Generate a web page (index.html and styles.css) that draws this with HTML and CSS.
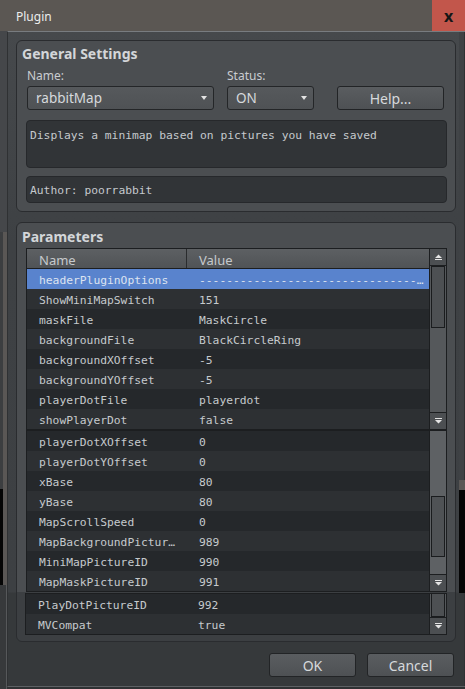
FILE: index.html
```html
<!DOCTYPE html>
<html lang="en">
<head>
  <meta charset="UTF-8">
  <meta name="viewport" content="width=device-width, initial-scale=1.0">
  <title>Plugin</title>
  <link rel="stylesheet" href="styles.css">
</head>
<body>
  <div class="titlebar">
    <span class="title">Plugin</span>
    <button class="close">x</button>
  </div>

  <div class="frame">
    <!-- strips of the windows behind -->
    <div class="edge">
      <div class="edge-top"></div>
      <div class="edge-mid"></div>
      <div class="edge-dark"></div>
      <div class="edge-bottom"></div>
    </div>

    <div class="dialog">
      <section class="group general">
        <h2>General Settings</h2>
        <div class="fields">
          <div class="field field-name">
            <label>Name:</label>
            <div class="combo"><span>rabbitMap</span><i class="caret"></i></div>
          </div>
          <div class="field field-status">
            <label>Status:</label>
            <div class="combo"><span>ON</span><i class="caret"></i></div>
          </div>
          <div class="field field-help">
            <button class="btn">Help...</button>
          </div>
        </div>
        <div class="textbox desc">Displays a minimap based on pictures you have saved</div>
        <div class="textbox author">Author: poorrabbit</div>
      </section>

      <section class="group params">
        <h2>Parameters</h2>
        <div class="table">
          <div class="panel panel-a">
            <div class="list">
              <div class="head"><span>Name</span><span>Value</span></div>
              <div class="rows">
                <div class="row selected"><span class="key">headerPluginOptions</span><span class="val">------------------------------------------------</span></div>
                <div class="row"><span class="key">ShowMiniMapSwitch</span><span class="val">151</span></div>
                <div class="row"><span class="key">maskFile</span><span class="val">MaskCircle</span></div>
                <div class="row"><span class="key">backgroundFile</span><span class="val">BlackCircleRing</span></div>
                <div class="row"><span class="key">backgroundXOffset</span><span class="val">-5</span></div>
                <div class="row"><span class="key">backgroundYOffset</span><span class="val">-5</span></div>
                <div class="row"><span class="key">playerDotFile</span><span class="val">playerdot</span></div>
                <div class="row"><span class="key">showPlayerDot</span><span class="val">false</span></div>
              </div>
            </div>
            <div class="scroll">
              <div class="step up"><svg width="9" height="6" viewBox="0 0 9 6"><path d="M1 4L4.5 0.5 8 4z M1 5h7v1H1z" fill="#e4e4e4"/></svg></div>
              <div class="thumb"></div>
              <div class="step down"><svg width="9" height="6" viewBox="0 0 9 6"><path d="M1 0h7v1H1z M1 2h7L4.5 5.5z" fill="#e4e4e4"/></svg></div>
            </div>
          </div>

          <div class="panel panel-b">
            <div class="list">
              <div class="rows">
                <div class="row"><span class="key">playerDotXOffset</span><span class="val">0</span></div>
                <div class="row"><span class="key">playerDotYOffset</span><span class="val">0</span></div>
                <div class="row"><span class="key">xBase</span><span class="val">80</span></div>
                <div class="row"><span class="key">yBase</span><span class="val">80</span></div>
                <div class="row"><span class="key">MapScrollSpeed</span><span class="val">0</span></div>
                <div class="row"><span class="key">MapBackgroundPictureID</span><span class="val">989</span></div>
                <div class="row"><span class="key">MiniMapPictureID</span><span class="val">990</span></div>
                <div class="row"><span class="key">MapMaskPictureID</span><span class="val">991</span></div>
              </div>
            </div>
            <div class="scroll">
              <div class="thumb"></div>
              <div class="step down"><svg width="9" height="6" viewBox="0 0 9 6"><path d="M1 0h7v1H1z M1 2h7L4.5 5.5z" fill="#e4e4e4"/></svg></div>
            </div>
          </div>

          <div class="panel panel-c">
            <div class="list">
              <div class="rows">
                <div class="row"><span class="key">PlayDotPictureID</span><span class="val">992</span></div>
                <div class="row"><span class="key">MVCompat</span><span class="val">true</span></div>
              </div>
            </div>
            <div class="scroll">
              <div class="thumb"></div>
              <div class="step down"><svg width="9" height="6" viewBox="0 0 9 6"><path d="M1 0h7v1H1z M1 2h7L4.5 5.5z" fill="#e4e4e4"/></svg></div>
            </div>
          </div>
        </div>
      </section>

      <div class="actions">
        <button class="btn">OK</button>
        <button class="btn">Cancel</button>
      </div>
    </div>

    <div class="edge-right">
      <div class="er-top"></div>
      <div class="er-grey"></div>
      <div class="er-dark"></div>
      <div class="er-bottom"></div>
    </div>
  </div>
</body>
</html>
```

FILE: styles.css
```css
* {
  margin: 0;
  padding: 0;
  box-sizing: border-box;
}

body {
  width: 465px;
  height: 689px;
  overflow: hidden;
  background: #2f3133;
  font-family: "Noto Sans", "Liberation Sans", sans-serif;
  color: #c9ccd0;
}

/* title bar */
.titlebar {
  height: 31px;
  display: flex;
  align-items: center;
  background: #5b5753;
}

.title {
  padding: 1px 0 0 16px;
  font-size: 12px;
  color: #ededed;
}

.close {
  margin-left: auto;
  width: 33px;
  height: 31px;
  border: none;
  background: #c2564b;
  color: #161616;
  font: bold 16px "Noto Sans", sans-serif;
  line-height: 28px;
}

.frame {
  display: flex;
  align-items: flex-start;
  height: 658px;
}

/* left strip */
.edge {
  width: 7px;
  height: 658px;
  display: flex;
  flex-direction: column;
}

.edge-top { height: 201px; background: #45474a; }
.edge-mid { height: 257px; background: linear-gradient(to right, #3c3e40 3px, #5a5755 3px); }
.edge-dark { height: 96px; background: linear-gradient(to right, #050505 3px, #5a5755 3px); }
.edge-bottom { flex: 1; background: linear-gradient(to right, #37393b 6px, #56585a 6px); }

/* right strip */
.edge-right {
  width: 6px;
  height: 656px;
  display: flex;
  flex-direction: column;
  border-top: 1px solid #787c80;
  border-bottom: 1px solid #5e6164;
}

.er-top { height: 448px; background: linear-gradient(to right, #3f4245 5px, #2f3133 5px); }
.er-grey { height: 10px; background: #5a5755; }
.er-dark { height: 103px; background: #050505; }
.er-bottom { flex: 1; background: linear-gradient(to right, #36393b 5px, #2f3133 5px); }

/* dialog body */
.dialog {
  width: 452px;
  height: 656px;
  display: flex;
  flex-direction: column;
  border-left: 1px solid #2f3133;
  border-top: 1px solid #787c80;
  border-bottom: 1px solid #5e6164;
  padding: 8px 3px 9px 8px;
  background: linear-gradient(#46494c 0, #3e4144 210px, #3d4043 560px, #36393b 561px);
}

.group {
  border: 1px solid #2a2c2f;
  border-radius: 6px;
  background: #4b4e51;
  padding: 3px 8px 8px 9px;
}

.group h2 {
  margin: 0 0 2px -4px;
  font-size: 14px;
  font-weight: 700;
  line-height: 20px;
  color: #d3d6d9;
}

.params {
  margin-top: 10px;
  height: 420px;
  background: linear-gradient(#4b4e51 369px, #3c3f42 369px);
}

.params h2 {
  padding-top: 1px;
  line-height: 19px;
}

/* name / status / help row */
.fields {
  display: flex;
}

.field {
  display: flex;
  flex-direction: column;
  gap: 2px;
}

.field label {
  padding-top: 2px;
  font-size: 12px;
  line-height: 16px;
  color: #c9ccd0;
}

.field-name { width: 188px; padding-left: 1px; }
.field-status { width: 87px; margin-left: 13px; }
.field-help { width: 107px; margin-left: 23px; justify-content: flex-end; }

.combo {
  height: 24px;
  display: flex;
  align-items: center;
  justify-content: space-between;
  padding: 0 6px 0 8px;
  border: 1px solid #242628;
  border-radius: 3px;
  background: linear-gradient(#56595c, #4f5255);
  font-size: 13.5px;
  color: #d6d9dc;
}

.caret {
  width: 0;
  height: 0;
  border-left: 3.5px solid transparent;
  border-right: 3.5px solid transparent;
  border-top: 4px solid #e2e2e2;
}

.btn {
  height: 24px;
  border: 1px solid #222426;
  border-radius: 3px;
  background: linear-gradient(#5a5d60, #4e5154);
  color: #d6d9dc;
  font: 14px "Noto Sans", sans-serif;
}

.textbox {
  border: 1px solid #26282b;
  border-radius: 4px;
  background: #313437;
  padding: 7px 3px 0;
  font: 11.3px/16px "DejaVu Sans Mono", monospace;
  color: #c5c9cd;
}

.desc {
  margin-top: 10px;
  height: 48px;
}

.author {
  margin-top: 8px;
  height: 27px;
  padding: 1px 3px 0;
  line-height: 25px;
}

/* parameter table */
.panel {
  display: flex;
  border: 1px solid #1c1e20;
  background: #25282b;
}

.panel-a { height: 182px; }
.panel-b { height: 162px; }
.panel-c { height: 42px; margin: 1px 0 0 -1px; }

.list {
  flex: 1;
  min-width: 0;
}

.head {
  display: flex;
  height: 20px;
  border-bottom: 1px solid #1c1e20;
  background: linear-gradient(#5d6063, #505356);
  font-size: 13px;
  line-height: 22px;
  color: #c6c9cc;
}

.head span:first-child {
  width: 160px;
  padding-left: 12px;
  border-right: 1px solid #2a2c2e;
}

.head span:last-child {
  padding-left: 12px;
}

.row {
  display: flex;
  height: 20px;
  padding-top: 3px;
  background: #25282b;
  font: 11.3px/17px "DejaVu Sans Mono", monospace;
  color: #c6cacd;
}

.row:nth-child(even) { background: #2d3033; }

.row.selected {
  background: #5983cd;
  color: #dde4f1;
}

.row span {
  white-space: nowrap;
  overflow: hidden;
  text-overflow: ellipsis;
}

.key {
  width: 160px;
  flex: none;
  padding: 0 8px 0 12px;
}

.val {
  flex: 1;
  padding: 0 4px 0 12px;
}

.scroll {
  width: 17px;
  flex: none;
  display: flex;
  flex-direction: column;
  border-left: 1px solid #1c1e20;
  background: #55585b;
}

.panel-b .scroll { background: #5e6164; }

.step {
  height: 17px;
  flex: none;
  display: flex;
  align-items: center;
  justify-content: center;
  background: #4c4f52;
}

.step svg { display: block; }

.step.up { border-bottom: 1px solid #1c1e20; }
.step.down { margin-top: auto; border-top: 1px solid #1c1e20; }

.thumb {
  height: 62px;
  margin: 0 1px;
  border: 1px solid #1a1c1e;
  background: #4d5053;
}

.panel-b .thumb { margin-top: 65px; height: 61px; background: #4f5255; }
.panel-c .thumb { height: 23px; border-top: none; }

/* OK / Cancel */
.actions {
  display: flex;
  justify-content: flex-end;
  gap: 11px;
  margin-top: 11px;
  padding-right: 2px;
}

.actions .btn { width: 87px; }
```
